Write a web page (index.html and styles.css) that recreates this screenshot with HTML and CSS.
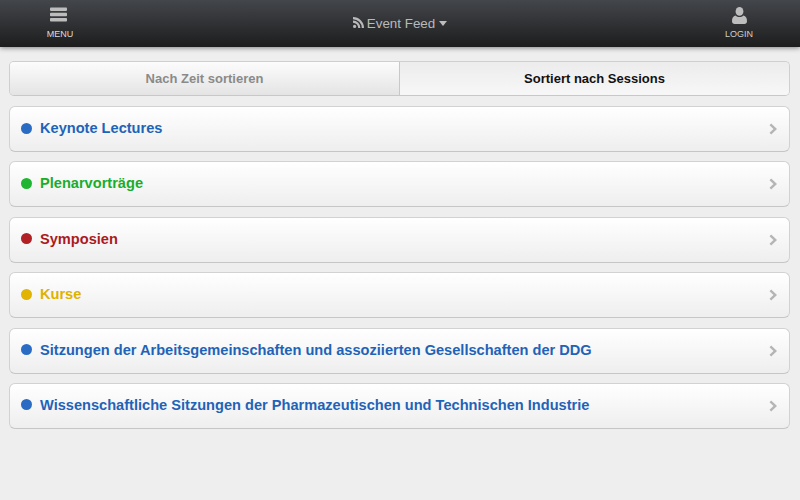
FILE: index.html
```html
<!DOCTYPE html>
<html lang="de">
<head>
<meta charset="utf-8">
<title>Event Feed</title>
<link rel="stylesheet" href="styles.css">
</head>
<body>
<header class="topbar">
  <a class="nav-btn nav-menu">
    <svg class="nav-icon" width="17" height="15" viewBox="0 0 17 15"><rect y="0.5" width="17" height="3.4" rx="0.8"/><rect y="5.8" width="17" height="3.4" rx="0.8"/><rect y="11.1" width="17" height="3.4" rx="0.8"/></svg>
    <span>MENU</span>
  </a>
  <div class="feed">
    <svg class="rss" width="11" height="11" viewBox="0 0 11 11"><circle cx="1.6" cy="9.4" r="1.6"/><path d="M0 3.6v2.2a5.2 5.2 0 0 1 5.2 5.2h2.2A7.4 7.4 0 0 0 0 3.6z"/><path d="M0 0v2.2A8.8 8.8 0 0 1 8.8 11H11A11 11 0 0 0 0 0z"/></svg>
    <span>Event Feed</span>
    <i class="caret"></i>
  </div>
  <a class="nav-btn nav-login">
    <svg class="nav-icon" width="15" height="17" viewBox="0 0 15 17"><ellipse cx="7.5" cy="4.4" rx="3.9" ry="4.4"/><path d="M0 14.2c0-3 1-5 3.6-5.6 1 1 2.4 1.5 3.9 1.5s2.900-.5 3.900-1.500C14 9.200 15 11.200 15 14.200 15 16 13.800 17 12.500 17h-10C1.200 17 0 16 0 14.200z"/></svg>
    <span>LOGIN</span>
  </a>
</header>
<main class="content">
  <div class="tabs">
    <div class="tab tab-off">Nach Zeit sortieren</div>
    <div class="tab tab-on">Sortiert nach Sessions</div>
  </div>
  <ul class="list">
    <li class="row blue"><i class="dot"></i><span class="label">Keynote Lectures</span><svg class="chev" width="9" height="12" viewBox="0 0 9 12"><path d="M2.200 0.500 8 6l-5.800 5.500L0.500 9.700 4.500 6 0.500 2.300z"/></svg></li>
    <li class="row green"><i class="dot"></i><span class="label">Plenarvorträge</span><svg class="chev" width="9" height="12" viewBox="0 0 9 12"><path d="M2.200 0.500 8 6l-5.800 5.500L0.500 9.700 4.500 6 0.500 2.300z"/></svg></li>
    <li class="row red"><i class="dot"></i><span class="label">Symposien</span><svg class="chev" width="9" height="12" viewBox="0 0 9 12"><path d="M2.200 0.500 8 6l-5.800 5.500L0.500 9.700 4.500 6 0.500 2.300z"/></svg></li>
    <li class="row yellow"><i class="dot"></i><span class="label">Kurse</span><svg class="chev" width="9" height="12" viewBox="0 0 9 12"><path d="M2.200 0.500 8 6l-5.800 5.500L0.500 9.700 4.500 6 0.500 2.300z"/></svg></li>
    <li class="row blue"><i class="dot"></i><span class="label">Sitzungen der Arbeitsgemeinschaften und assoziierten Gesellschaften der DDG</span><svg class="chev" width="9" height="12" viewBox="0 0 9 12"><path d="M2.200 0.500 8 6l-5.800 5.500L0.500 9.700 4.500 6 0.500 2.300z"/></svg></li>
    <li class="row blue"><i class="dot"></i><span class="label">Wissenschaftliche Sitzungen der Pharmazeutischen und Technischen Industrie</span><svg class="chev" width="9" height="12" viewBox="0 0 9 12"><path d="M2.200 0.500 8 6l-5.800 5.500L0.500 9.700 4.500 6 0.500 2.300z"/></svg></li>
  </ul>
</main>
</body>
</html>
```
FILE: styles.css
```css
* { box-sizing: border-box; }
html, body { margin: 0; height: 100%; }
body {
  background: #eeeeee;
  font-family: "Liberation Sans", Arial, sans-serif;
  overflow: hidden;
}
.topbar {
  height: 47px;
  display: flex;
  align-items: flex-start;
  justify-content: space-between;
  padding: 0 21px 0 20px;
  background: linear-gradient(#43464b, #1d1d1d);
  box-shadow: 0 1px 5px rgba(0, 0, 0, 0.45);
}
.nav-btn {
  width: 80px;
  display: flex;
  flex-direction: column;
  align-items: center;
  padding-top: 7px;
  color: #dcdcdc;
  font-size: 9px;
  line-height: 11px;
}
.nav-menu span { margin-top: 7px; }
.nav-menu .nav-icon { margin-right: 3px; }
.nav-login span { margin-top: 5px; color: #cfcfcf; }
.nav-login .nav-icon { margin-left: 2px; }
.nav-icon { fill: #bdbdbd; display: block; }
.feed {
  display: flex;
  align-items: center;
  height: 47px;
  color: #b9b9b9;
  font-size: 13.4px;
}
.rss { fill: #b9b9b9; margin-right: 3px; margin-top: -3px; margin-left: 1px; }
.caret {
  width: 0;
  height: 0;
  margin-left: 4px;
  margin-top: -1px;
  border-left: 4px solid transparent;
  border-right: 4px solid transparent;
  border-top: 5px solid #bdbdbd;
}
.content { padding: 14px 10px 0 9px; }
.tabs {
  display: flex;
  height: 35px;
  border: 1px solid #cfcfcf;
  border-bottom-color: #c8c8c8;
  border-radius: 5px;
  overflow: hidden;
}
.tab {
  flex: 1;
  display: flex;
  align-items: center;
  justify-content: center;
  font-size: 13px;
  font-weight: bold;
}
.tab-off {
  color: #8a8a8a;
  background: linear-gradient(#fcfcfc, #e4e4e4);
  border-right: 1px solid #c8c8c8;
}
.tab-on {
  color: #111111;
  background: linear-gradient(#ececec, #f7f7f7);
}
.list {
  list-style: none;
  margin: 10px 0 0;
  padding: 0;
  display: flex;
  flex-direction: column;
  gap: 9.400px;
}
.row {
  height: 46px;
  display: flex;
  align-items: center;
  padding: 0 12px 2px 11.300px;
  border: 1px solid #d2d2d2;
  border-bottom-color: #c6c6c6;
  border-radius: 6px;
  background: linear-gradient(#ffffff, #eeeeee);
}
.dot {
  width: 11px;
  height: 11px;
  border-radius: 50%;
  margin-right: 7.700px;
  flex: none;
}
.label {
  flex: 1;
  font-size: 14.6px;
  font-weight: bold;
}
.chev { fill: #b5b5b5; flex: none; margin: 2px -1px 0 0; }
.blue .label { color: #1f63b8; }
.blue .dot { background: #2a6cc4; }
.green .label { color: #19ad2c; }
.green .dot { background: #1fb532; }
.red .label { color: #ab1a1e; }
.red .dot { background: #b02025; }
.yellow .label { color: #dfb200; }
.yellow .dot { background: #e0b400; }
```
